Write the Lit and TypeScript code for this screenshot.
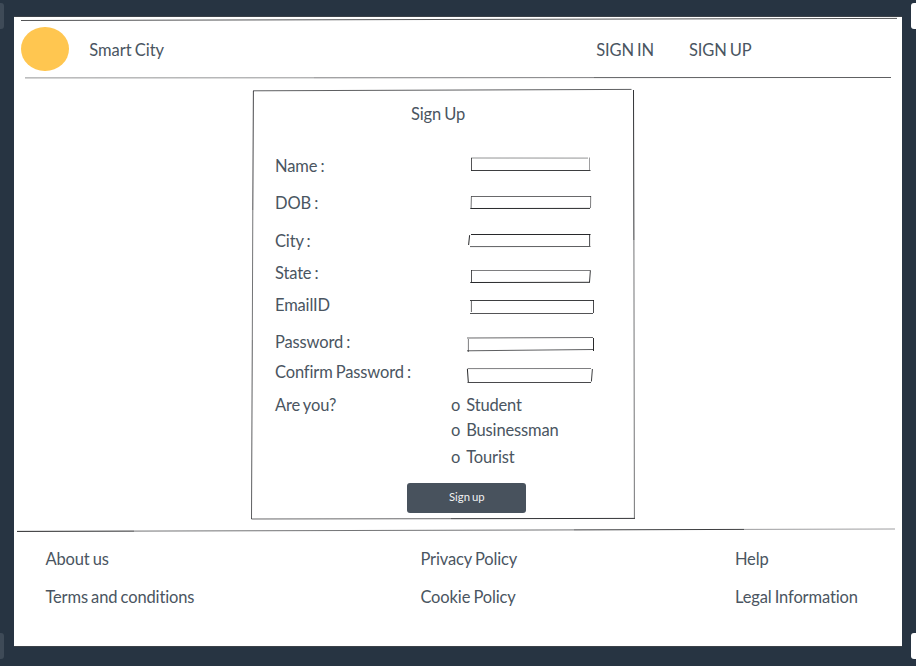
import { LitElement, html, svg, css } from "lit";
import { customElement, property } from "lit/decorators.js";

// x1, y1, x2, y2 and the pencil pressure (stroke opacity).
type Line = [number, number, number, number, number?];

const strokes = (lines: Line[]) =>
  lines.map(
    ([x1, y1, x2, y2, ink = 1]) => svg`<line x1=${x1} y1=${y1} x2=${x2} y2=${y2} stroke-opacity=${ink} />`
  );

// Hand-drawn input outlines: top, left, bottom, right strokes.
const FIELDS: { label: string; box: Line[] }[] = [
  { label: "Name :", box: [[5, 2, 122, 2.1, 0.5], [5.5, 2, 5.5, 14.5, 0.8], [5, 14.5, 124.5, 14.5, 0.9], [123.5, 1.5, 123.5, 14, 0.45]] },
  { label: "DOB :", box: [[5, 3.5, 125, 3.5, 0.7], [5.4, 3.5, 5.1, 15, 0.65], [4.3, 15.5, 124, 15.4], [124.7, 3, 124.5, 15, 0.6]] },
  { label: "City :", box: [[5, 3.5, 124.5, 3.5], [3.6, 4.2, 2.6, 14], [4, 15.6, 124.5, 15.5, 0.75], [123.6, 3, 123.6, 15, 0.85]] },
  { label: "State :", box: [[5, 7.5, 124.5, 7.5, 0.6], [5.5, 7, 5.5, 19, 0.8], [4.3, 19.5, 124, 19.3], [124.4, 7.5, 123.5, 19, 0.9]] },
  { label: "EmailID", box: [[4, 5.5, 128, 5.5, 0.9], [5.4, 6, 5.4, 17, 0.7], [4, 18.5, 127, 18.5, 0.8], [127.5, 5, 127.5, 18, 0.85]] },
  { label: "Password :", box: [[1, 6, 127, 5.5, 0.7], [2.4, 7, 2.4, 20, 0.6], [1, 18.8, 127, 17.5, 0.75], [127.5, 6, 127.5, 19]] },
  { label: "Confirm Password :", box: [[1.5, 6.6, 125, 6.5, 0.6], [1.4, 7, 2.3, 20], [1.5, 20.5, 125, 20.5, 0.85], [126.4, 7, 125.4, 19.5, 0.9]] },
];

const ROLES = ["Student", "Businessman", "Tourist"];

const LINKS = [
  ["About us", "Privacy Policy", "Help"],
  ["Terms and conditions", "Cookie Policy", "Legal Information"],
];

@customElement("sketch-lines")
class SketchLines extends LitElement {
  @property({ attribute: false }) lines: Line[] = [];
  static styles = css`
    :host { display: block; }
    svg { display: block; width: 100%; height: 100%; overflow: visible; }
    line { stroke: #1c1d20; stroke-width: 0.95; }
  `;
  render() {
    return html`<svg aria-hidden="true">${strokes(this.lines)}</svg>`;
  }
}

@customElement("app-root")
class AppRoot extends LitElement {
  static styles = css`
    :host {
      display: block;
      position: relative;
      box-sizing: border-box;
      width: 916px;
      height: 666px;
      padding: 16px 14px 0;
      overflow: hidden;
      background: #273442;
      color: #4a5561;
      font: 16.5px/20px Lato, sans-serif;
      letter-spacing: -0.15px;
      word-spacing: -0.9px;
    }
    .page {
      display: flex;
      flex-direction: column;
      height: 629px;
      background: #fff;
      border-top: 1px solid #3b4148;
      border-bottom: 1px solid #3b4148;
    }
    .handle { position: absolute; width: 10px; height: 26px; border-radius: 3px; background: #3e4a57; }
    .left { left: -6px; }
    .right { left: 911px; background: #fff; }
    .top { top: 3px; }
    .bottom { top: 633px; }
    .rule { height: 5px; flex: none; }
    header { display: flex; align-items: center; height: 54px; padding-left: 7.3px; flex: none; }
    .logo { width: 48px; height: 44.5px; border-radius: 50%; background: #ffc650; }
    .brand { margin: 1px 0 0 20px; letter-spacing: -0.05px; }
    nav { display: flex; gap: 35px; margin: 1px 150.5px 0 auto; }
    .card {
      position: relative;
      box-sizing: border-box;
      width: 384px;
      height: 430px;
      margin: 9px 0 0 237px;
      padding: 14px 0 0 24px;
      flex: none;
    }
    .frame { position: absolute; inset: 0; }
    h1 { margin: 0 0 32px 136px; font: inherit; }
    .form {
      display: grid;
      grid-template-columns: 191px 130px;
      grid-template-rows: 37px 38px 32px 32px 37px 30px 33px;
    }
    .field { height: 24px; }
    .roles { display: flex; }
    .ask { width: 176px; }
    ul { margin: 0; padding: 0; list-style: none; display: grid; grid-template-rows: 25px 27px 20px; }
    li { display: flex; gap: 6px; }
    button {
      display: block;
      width: 119px;
      height: 30.5px;
      margin: 15.5px 0 0 132.3px;
      padding: 0 0 2px;
      border: 0;
      border-radius: 3px;
      background: #48525d;
      color: #f0f1f2;
      font: 11.3px/14px Lato, sans-serif;
      word-spacing: -1px;
    }
    .foot-rule { margin-top: 8px; }
    footer {
      display: grid;
      grid-template-columns: 375px 314.5px auto;
      row-gap: 18px;
      padding: 16px 0 0 31.4px;
      letter-spacing: -0.13px;
    }
  `;

  render() {
    return html`
      <span class="handle left top"></span><span class="handle right top"></span>
      <span class="handle left bottom"></span><span class="handle right bottom"></span>
      <div class="page">
        <sketch-lines class="rule" .lines=${[[7, 3.5, 883, 1.4, 0.8]]}></sketch-lines>
        <header>
          <span class="logo"></span>
          <span class="brand">Smart City</span>
          <nav><span>SIGN IN</span><span>SIGN UP</span></nav>
        </header>
        <sketch-lines
          class="rule"
          .lines=${[[11, 1.9, 300, 1.8, 0.5], [300, 1.8, 580, 1.6, 0.6], [580, 1.6, 877, 1.5, 0.75]]}
        ></sketch-lines>
        <section class="card">
          <sketch-lines
            class="frame"
            .lines=${[
              [2, 0.8, 380.5, -0.6, 0.75],
              [2.4, 1, 1.8, 120, 0.85],
              [1.8, 120, 1.3, 250, 0.65],
              [1.3, 250, 0.5, 429, 0.75],
              [0.5, 429, 200, 428.7, 0.7],
              [200, 428.7, 384, 428.4, 0.95],
              [382.5, 0, 382.9, 150, 0.95],
              [382.9, 150, 383.4, 428, 0.65],
            ]}
          ></sketch-lines>
          <h1>Sign Up</h1>
          <div class="form">
            ${FIELDS.map(
              (f) => html`<span>${f.label}</span><sketch-lines class="field" .lines=${f.box}></sketch-lines>`
            )}
          </div>
          <div class="roles">
            <span class="ask">Are you?</span>
            <ul>${ROLES.map((r) => html`<li><span>o</span><span>${r}</span></li>`)}</ul>
          </div>
          <button>Sign up</button>
        </section>
        <sketch-lines
          class="rule foot-rule"
          .lines=${[[3, 3.4, 120, 3.1], [120, 3.1, 560, 1.9, 0.65], [560, 1.9, 730, 1.4, 0.9], [730, 1.4, 881, 1, 0.45]]}
        ></sketch-lines>
        <footer>${LINKS.flat().map((t) => html`<span>${t}</span>`)}</footer>
      </div>
    `;
  }
}
